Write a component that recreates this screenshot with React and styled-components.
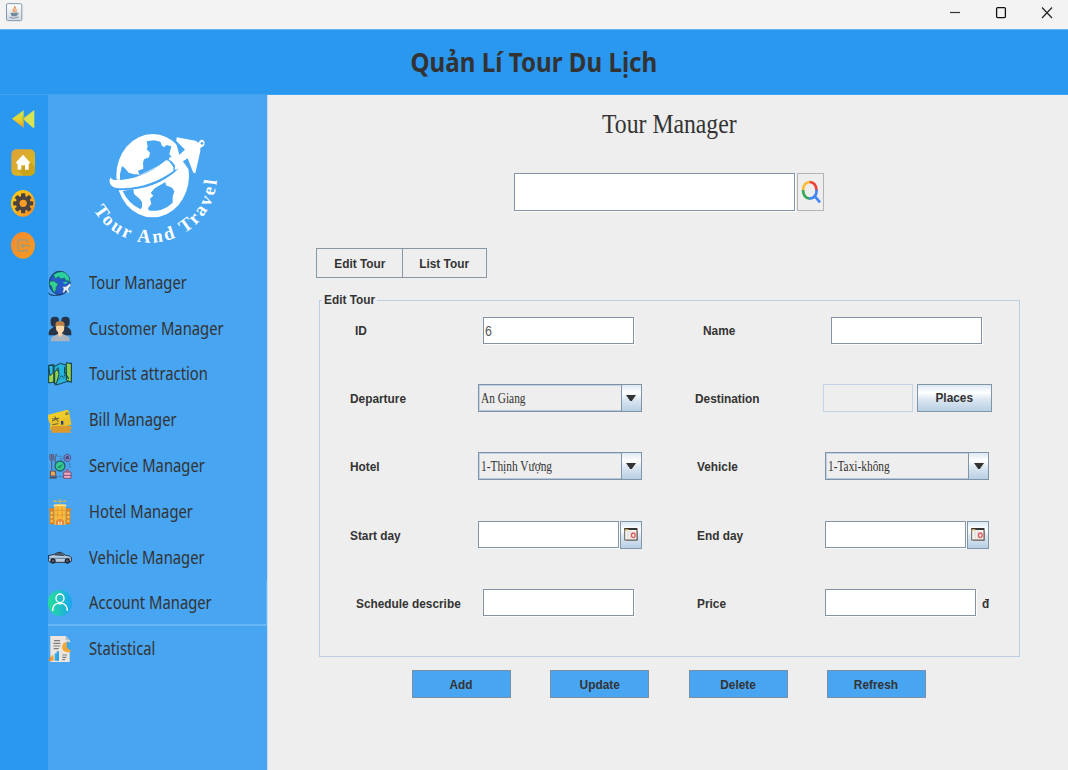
import React from "react";
import styled, { createGlobalStyle, css } from "styled-components";

const Global = createGlobalStyle`
  * { box-sizing: border-box; }
  body { margin: 0; background: #eee; color: #333; overflow: hidden; }
  button, input { font: inherit; color: inherit; padding: 0; margin: 0; border-radius: 0; outline: none; }
`;

const sans = `"Liberation Sans", Arial, sans-serif`;
const serif = `"Liberation Serif", "Times New Roman", serif`;
const tahoma = `"Noto Sans", Tahoma, sans-serif`;

const Window = styled.div`
  width: 1068px;
  height: 770px;
  display: flex;
  flex-direction: column;
  overflow: hidden;
  font: bold 13.4px/16px ${sans};
`;

const Narrow = styled.span`
  display: inline-block;
  white-space: nowrap;
  transform: scaleX(${(p) => p.$x || 0.885});
  transform-origin: ${(p) => (p.$left ? "left" : "center")} center;
`;

const TitleBar = styled.header`
  height: 29px;
  flex: none;
  display: flex;
  justify-content: space-between;
  background: #f3f3f3;
  padding: 3px 15px 0 6px;
`;

const WindowControls = styled.div`
  display: flex;
  gap: 34px;
  padding-top: 3px;
  svg { display: block; }
`;

const Banner = styled.div`
  height: 66px;
  flex: none;
  display: flex;
  justify-content: center;
  align-items: center;
  background: #2b98ef;
  border-top: 1px solid #63b3f3;
  border-bottom: 1px solid #3fa2f1;
  font: bold 26.2px/32px ${tahoma};
  padding-bottom: 1px;
`;

const Body = styled.div`
  flex: 1;
  display: flex;
  min-height: 0;
`;

const Rail = styled.nav`
  width: 48px;
  flex: none;
  background: #2b98ef;
  display: flex;
  flex-direction: column;
  padding: 14px 0 0 11px;
  svg { display: block; }
`;

const RailButton = styled.div`
  height: 27px;
  margin-bottom: ${(p) => p.$gap || 13}px;
`;

const Sidebar = styled.aside`
  width: 220px;
  flex: none;
  background: #48a5f2;
  border-right: 1px solid #c4def4;
`;

const LogoBox = styled.div`
  padding: 25px 0 0 32px;
  height: 165px;
  svg { display: block; }
`;

const MenuItem = styled.div`
  height: 45.8px;
  display: flex;
  align-items: center;
  gap: 17.4px;
  font: 18.4px/24px ${tahoma};
  svg { flex: none; display: block; }
  span { padding-bottom: 2px; }
  ${(p) =>
    p.$active &&
    css`
      padding-top: 2px;
      border-bottom: 2px solid #69b6f5;
      border-right: 1px solid #69b6f5;
    `}
`;

const Main = styled.main`
  flex: 1;
  display: flex;
  flex-direction: column;
  min-width: 0;
`;

const PageTitle = styled.h1`
  margin: 13px 0 0;
  height: 32px;
  text-align: center;
  font: 27.6px/32px ${serif};
  padding-left: 2px;
`;

const SearchRow = styled.div`
  display: flex;
  gap: 2px;
  margin: 33px 0 0 246px;
`;

const TextField = styled.input`
  width: ${(p) => p.$w || 151}px;
  height: ${(p) => p.$h || 27}px;
  border: 1px solid #8494a4;
  background: #fff;
  box-shadow: 1px 1px 0 #fcfcfc;
  font: 14px/20px ${sans};
  color: #555;
  padding-left: 2px;
  ${(p) =>
    p.$disabled &&
    css`
      background: #eee;
      border-color: #c3d5e6;
      box-shadow: none;
    `}
`;

const ValueField = styled.div`
  width: 151px;
  height: 27px;
  border: 1px solid #8494a4;
  background: #fff;
  box-shadow: 1px 1px 0 #fcfcfc;
  padding: 4px 0 0 1px;
  font: 14px/18px ${sans};
  color: #555;
`;

const SearchButton = styled.button`
  width: 27px;
  height: 38px;
  border: 1px solid #b3b3b3;
  background: #eee;
  display: flex;
  align-items: center;
  justify-content: center;
`;

const Tabs = styled.div`
  display: flex;
  margin: 37px 0 0 48px;
`;

const Tab = styled.button`
  width: ${(p) => p.$w}px;
  height: 30px;
  border: 1px solid #8797a6;
  background: #eee;
  padding-top: 2px;
  & + & { margin-left: -1px; }
`;

const Panel = styled.fieldset`
  width: 701px;
  height: 365px;
  margin: 14px 0 0 51px;
  border: 1px solid #bdd0e3;
  padding: 8px 0 0;
  min-width: 0;
  legend {
    padding: 0 0 0 2px;
    width: 55px;
    margin-left: 2px;
    height: 16px;
  }
`;

const FormRow = styled.div`
  display: flex;
  height: 68.2px;
`;

const Field = styled.div`
  width: 348px;
  flex: none;
  height: 28px;
  display: flex;
  align-items: center;
`;

const Label = styled.label`
  padding-left: ${(p) => p.$inset}px;
  width: ${(p) => p.$w}px;
  flex: none;
  white-space: nowrap;
  padding-top: 2px;
`;

const Group = styled.div`
  display: flex;
  gap: ${(p) => p.$gap || 1}px;
`;

const Combo = styled.div`
  width: 164px;
  height: 28px;
  border: 1px solid #7f92a6;
  box-shadow: inset 1px 1px 0 #c0d3e6, inset 0 -1px 0 #b3c6d9;
  display: flex;
  justify-content: space-between;
  font: 14.4px/26px ${serif};
  padding-left: 2px;
`;

const steel = css`
  border: 1px solid #8195a9;
  background: linear-gradient(#dde8f3 0%, #fff 30%, #dce7f1 55%, #b8cfe5 100%);
`;

const Arrow = styled.div`
  ${steel}
  border-width: 0 0 0 1px;
  width: 20px;
  display: flex;
  align-items: center;
  justify-content: center;
`;

const SteelButton = styled.button`
  ${steel}
  width: ${(p) => p.$w}px;
  height: 28px;
  display: flex;
  align-items: center;
  justify-content: center;
`;

const Currency = styled.span`
  width: 7px;
  overflow: hidden;
  padding-top: 7px;
  margin-left: 5px;
`;

const Actions = styled.div`
  display: flex;
  gap: 39.3px;
  margin: 13px 0 0 144px;
`;

const Action = styled.button`
  width: 99px;
  height: 28px;
  background: #48a5f2;
  border: 1px solid #7b8fa3;
  padding-top: 1px;
`;

const Icon = ({ w = 24, h = 26, box = "0 0 72 78", children }) => (
  <svg width={w} height={h} viewBox={box} preserveAspectRatio="none">{children}</svg>
);

const Logo = () => (
  <svg width="160" height="140" viewBox="0 0 480 420">
    <defs><path id="arc" d="M40 270 A200 203 0 0 0 411 160" /></defs>
    <ellipse cx="218" cy="167" rx="109" ry="125" fill="#fff" />
    <g fill="#48a5f2">
      <path d="M200 64 L222 61 241 65 246 77 252 82 260 75 274 79 268 103 276 112 255 128 178 165 174 152 190 146 189 128 192 118 207 112 210 98 200 88 203 80Z" />
      <path d="M120 162 L126 138 134 144 146 158 162 163 174 163 180 172 120 182Z" />
      <path d="M128 213 L160 207 162 222 180 238 186 247 186 262 182 268 Q144 250 128 213Z" />
      <path d="M224 205 L256 186 258 196 276 203 283 214 278 230 278 248 262 261 244 269 Q220 275 206 271 L204 264 214 252 210 236 220 227 212 219Z" />
      <path d="M84 168 C110 194 180 175 270 116 L294 148 C250 190 186 216 96 210Z" />
      <path d="M282 46 L300 112 330 154 334 110 304 64Z" />
    </g>
    <path d="M92 171 C84 184 91 200 106 203 C168 212 238 184 280 153 L280 140 266 122 258 121 C205 165 150 182 106 180 Q92 179 92 171Z" fill="#fff" />
    <path d="M290 52 L346 62 357 68 Q358 58 368 59 Q378 66 371 78 L361 84 361 94 346 160 340 158 323 115 299 130 290 150 284 148 286 132 266 118 270 111 287 114 315 89 289 63Z" fill="#fff" />
    <circle cx="366" cy="70" r="4" fill="#48a5f2" />
    <text fill="#fff" fontFamily="Liberation Serif, serif" fontWeight="bold" fontSize="56" textLength="506" lengthAdjust="spacing">
      <textPath href="#arc" textLength="506" lengthAdjust="spacing">Tour And Travel</textPath>
    </text>
  </svg>
);

const JavaIcon = () => (
  <Icon w={17} h={19} box="0 0 51 57">
    <defs><linearGradient id="jv" x2="0" y2="1"><stop stopColor="#fff" /><stop offset="1" stopColor="#d2d8de" /></linearGradient></defs>
    <rect x="1.5" y="2" width="46" height="51" rx="4" fill="url(#jv)" stroke="#8397aa" strokeWidth="3" />
    <path d="M24 27 Q16 21 24 16 Q28 13 25 9 Q33 15 26 20 Q23 23 27 28 M31 28 Q27 24 32 19" fill="none" stroke="#e98845" strokeWidth="3" />
    <path d="M13 29 H34 L32 40 H17Z" fill="#71889d" />
    <path d="M33 30 Q41 30 33 37" fill="none" stroke="#71889d" strokeWidth="3" />
    <path d="M10 43 Q24 49 38 42" fill="none" stroke="#8298aa" strokeWidth="3" />
  </Icon>
);

const RewindIcon = () => (
  <Icon w={24} h={20} box="0 0 72 60">
    <defs>
      <linearGradient id="rw1" x1="1" y2="1"><stop stopColor="#bfe65a" /><stop offset=".5" stopColor="#e8d32e" /><stop offset="1" stopColor="#ef9d25" /></linearGradient>
      <linearGradient id="rw2" x2="1" y2="1"><stop stopColor="#f1b45c" /><stop offset=".5" stopColor="#d5e555" /><stop offset="1" stopColor="#e3e34a" /></linearGradient>
    </defs>
    <path d="M3 29 L38 4 V56Z" fill="url(#rw1)" />
    <path d="M35 29 L70 3 V56 H66Z" fill="url(#rw2)" />
    <path d="M38 20 Q33 29 38 38" fill="none" stroke="#7fba59" strokeWidth="3" />
  </Icon>
);

const HomeIcon = () => (
  <Icon w={24} h={27} box="0 0 72 81">
    <defs><linearGradient id="hm" x2="1" y2="1"><stop stopColor="#dd9f3c" /><stop offset="1" stopColor="#d9bf18" /></linearGradient></defs>
    <rect x="1" y="1" width="71" height="79" rx="15" fill="url(#hm)" />
    <path d="M20 62 L58 40 72 54 V65 Q71 80 56 80 H38Z" fill="#b98f14" opacity=".5" />
    <path d="M14 41 L36 17 58 41 53 45 V62 H42 V49 H31 V62 H20 V45Z" fill="#fff" />
  </Icon>
);

const GearIcon = () => (
  <Icon w={24} h={27} box="0 0 72 81">
    <defs><linearGradient id="gr" x1="0" x2="1" y2="1"><stop stopColor="#fbd014" /><stop offset=".5" stopColor="#fbb51c" /><stop offset="1" stopColor="#f98422" /></linearGradient></defs>
    <ellipse cx="36" cy="40" rx="36" ry="40" fill="url(#gr)" />
    <g fill="#4b4340">
      {[0, 45, 90, 135].map((a) => <rect key={a} x="30" y="10" width="13" height="60" rx="3" transform={`rotate(${a} 36.5 40)`} />)}
      <circle cx="36.5" cy="40" r="22" />
    </g>
    <circle cx="36.5" cy="40" r="11" fill="#fb9d24" />
  </Icon>
);

const ExitIcon = () => (
  <Icon w={24} h={27} box="0 0 72 81">
    <defs><linearGradient id="ex" x2="1" y2="1"><stop stopColor="#f58b32" /><stop offset="1" stopColor="#f59a1e" /></linearGradient></defs>
    <ellipse cx="36" cy="40" rx="36" ry="40" fill="url(#ex)" />
    <path d="M49 34 V24 H21 V56 H49 V50 M58 41 H32 M39 34 L31 41 39 48" fill="none" stroke="#a79a70" strokeWidth="4.6" />
  </Icon>
);

const GlobeIcon = () => (
  <Icon>
    <ellipse cx="35" cy="39" rx="31" ry="35" fill="#2459c9" stroke="#17345c" strokeWidth="3" />
    <path d="M16 14 Q35 0 52 8 Q68 20 66 38 L59 31 53 34 50 24 38 27 32 20 22 26Z" fill="#2ccfa0" stroke="#17614f" strokeWidth="2" />
    <path d="M5 34 L18 33 31 43 25 50 24 60 18 68 13 58 11 49 4 44Z" fill="#35cf92" stroke="#185f5a" strokeWidth="2" />
    <path d="M43 37 L59 35 53 43Z" fill="#2ccfa0" />
    <path d="M1 69 Q18 82 41 73 M4 73 Q22 80 33 79" stroke="#18345e" strokeWidth="3" fill="none" strokeDasharray="8 3" />
    <path d="M44 50 L54 50 65 41 69 45 61 56 64 69 59 68 54 59 48 68 44 67 47 57Z" fill="#ecf0f6" stroke="#667996" />
  </Icon>
);

const PeopleIcon = () => (
  <Icon>
    <g fill="#26344a">
      <rect x="8" y="2" width="25" height="30" rx="11" /><rect x="40" y="2" width="25" height="30" rx="11" />
      <path d="M2 58 Q1 40 10 38 L17 32 H57 L65 38 Q71 42 70 58Z" />
    </g>
    <path d="M9 76 Q8 62 19 60 L29 54 H45 L56 60 Q67 62 65 76Z" fill="#a9b4be" />
    <path d="M30 47 H43 V56 L36 64 30 56Z" fill="#f4d0a4" />
    <path d="M24 26 Q22 44 31 49 Q37 53 43 49 Q51 43 48 26Z" fill="#f9d8ac" />
    <path d="M23 32 Q19 15 36 16 Q53 15 49 32 L45 29 H28Z" fill="#bb8147" />
  </Icon>
);

const MapIcon = () => (
  <Icon>
    <g stroke="#143c48" strokeWidth="3">
      <path d="M2 13 L18 11 V63 L2 66Z" fill="#9bd551" />
      <path d="M18 17 L37 7 53 12 70 6 V62 L55 62 38 68 22 72 18 66Z" fill="#25b4dd" />
      <path d="M55 5 L70 8 V64 L55 57Z" fill="#8fce4b" />
      <path d="M2 13 L16 14 15 35 6 44Z" fill="#2bbbe4" />
      <path d="M20 34 L30 20 33 40 25 68 20 66Z" fill="#91d24c" />
    </g>
    <path d="M33 56 L41 43 47 52 52 35 M26 28 L34 30" stroke="#194352" strokeWidth="3" fill="none" strokeDasharray="5 3" />
    <path d="M50 17 V34 L62 54" stroke="#14494c" strokeWidth="4" fill="none" />
  </Icon>
);

const TicketIcon = () => (
  <Icon>
    <path d="M0 24 L60 8 65 22 68 40 70 53 6 69 7 51 1 39Z" fill="#e9c22a" />
    <path d="M13 57 H70 V67 L65 69 70 77 H9 L12 69 7 65Z" fill="#dc9a2e" />
    <path d="M0 24 L60 8 62 17 58 22 64 29 4 45Z" fill="#efcb2c" />
    <path d="M12 42 L34 33 M20 28 L31 45 M12 36 L29 34 M52 20 L59 16 M53 23 L62 20 M13 53 L31 50" stroke="#625d3a" strokeWidth="3" fill="none" />
    <rect x="39" y="42" width="7" height="11" fill="#263c84" />
  </Icon>
);

const ServiceIcon = () => (
  <Icon>
    <path d="M6 3 V19 Q12 25 16 18 V3 M11 3 V50 M26 3 Q18 15 22 27 L25 31 V51" fill="none" stroke="#596186" strokeWidth="4" />
    <path d="M36 17 H47 M29 10 H41 M25 71 H46 M65 31 V47" stroke="#47678e" strokeWidth="3" strokeDasharray="5 3" />
    <path d="M48 9 L57 3 67 8 68 19 60 27 49 22Z" fill="#7c83cc" stroke="#4c5a8e" strokeWidth="3" /><circle cx="58" cy="14" r="5" fill="#344b79" />
    <circle cx="36" cy="39" r="15" fill="#34c991" stroke="#275e72" strokeWidth="4" />
    <path d="M27 42 L46 32 36 46Z" fill="#24866d" />
    <path d="M7 54 H22 L24 69 H7Z" fill="#efa74d" stroke="#4d4c68" strokeWidth="3" />
    <path d="M4 74 H26" stroke="#4d4c68" strokeWidth="5" />
    <path d="M47 57 H69 V76 H47Z" fill="#f5a9c2" stroke="#775276" strokeWidth="3" />
    <path d="M51 58 Q58 35 65 58Z" fill="#a46485" /><path d="M47 67 H69" stroke="#775276" strokeWidth="3" />
  </Icon>
);

const HotelIcon = () => (
  <Icon>
    <path d="M15 7 H57 M36 0 V15 M23 4 V11 M49 4 V11" stroke="#f2bd38" strokeWidth="3" strokeDasharray="5 3" />
    <path d="M3 28 H19 V76 H5 V34 H3Z M53 28 H69 V34 H67 V76 H53Z" fill="#d98427" />
    <path d="M19 19 Q36 12 53 19 V77 H19Z" fill="#f8bd3d" />
    <path d="M17 19 H55" stroke="#ffe48b" strokeWidth="5" />
    <path d="M29 22 V58 M42 22 V58 M20 34 H52 M20 48 H52" stroke="#e9982f" strokeWidth="3" />
    <path d="M11 38 V70 M61 38 V70" stroke="#ffc85b" strokeWidth="6" strokeDasharray="8 4" />
    <path d="M24 78 V65 Q36 53 48 65 V78Z" fill="#e7893c" /><path d="M30 78 V68 H42 V78Z" fill="#ffe0a3" /><path d="M36 66 V78" stroke="#ed7438" strokeWidth="3" />
  </Icon>
);

const CarIcon = () => (
  <Icon>
    <path d="M1 32 L19 28 Q29 20 40 22 L53 31 Q70 32 71 39 L70 49 60 52 H8 L1 48Z" fill="#b9cce0" stroke="#29374a" strokeWidth="3" />
    <path d="M20 30 L29 24 38 24 49 32Z" fill="#496074" stroke="#29374a" strokeWidth="2" />
    <path d="M4 40 H69" stroke="#657d96" strokeWidth="3" />
    <g fill="#555b68" stroke="#1c2836" strokeWidth="4"><circle cx="15" cy="48" r="6" /><circle cx="58" cy="48" r="6" /></g>
    <path d="M1 31 V42" stroke="#0d4171" strokeWidth="5" />
  </Icon>
);

const AccountIcon = () => (
  <Icon>
    <defs><linearGradient id="ac" x2="1"><stop stopColor="#25e094" /><stop offset="1" stopColor="#1ba4f3" /></linearGradient></defs>
    <ellipse cx="36" cy="39" rx="36" ry="39" fill="url(#ac)" />
    <ellipse cx="36" cy="25" rx="12" ry="13" fill="none" stroke="#fff" strokeWidth="4" />
    <path d="M14 63 Q14 41 31 40 Q36 44 41 40 Q57 41 58 63" fill="none" stroke="#fff" strokeWidth="4" />
  </Icon>
);

const ReportIcon = () => (
  <Icon>
    <path d="M7 0 H53 L65 13 V78 H7Z" fill="#eee6de" />
    <path d="M53 0 V13 H65Z" fill="#b8bdbe" />
    <path d="M18 14 H36 M16 22 H37 M16 30 H37 M17 38 H32 M43 57 H57 M43 64 H55 M43 71 H51" stroke="#777e82" strokeWidth="3.5" />
    <path d="M57 18 V31 L70 44 Q64 52 56 48 L48 46 Q39 38 44 25 Q49 18 57 18Z" fill="#f5a637" />
    <path d="M57 16 Q70 20 70 34 L67 44 56 33Z" fill="#35a8ee" />
    <path d="M1 74 L7 63 H15 V74Z" fill="#f28b31" /><path d="M10 58 H17 V74 H10Z" fill="#f5a637" /><path d="M20 52 H33 V74 H20Z" fill="#37a9ea" /><path d="M26 46 H33 V74 H26Z" fill="#2ba1e8" />
  </Icon>
);

const GoogleSearchIcon = () => (
  <Icon w={20} h={24} box="0 0 60 72">
    <g fill="none" strokeWidth="8">
      <path d="M6 31 Q7 7 27 6" stroke="#fbbc37" /><path d="M26 6 Q45 7 47 31" stroke="#ea4335" />
      <path d="M6 30 Q7 54 26 56" stroke="#34a853" /><path d="M25 56 Q47 55 47 29 M40 47 L57 67" stroke="#4285f4" />
    </g>
  </Icon>
);

const CalendarIcon = () => (
  <Icon w={14} h={13} box="0 0 42 39">
    <rect x="2" y="3" width="37" height="33" fill="#f5f3f0" stroke="#68625f" strokeWidth="3" />
    <path d="M1 3 H40" stroke="#383634" strokeWidth="6" /><path d="M3 5 H13" stroke="#d0a24b" strokeWidth="4" />
    <path d="M12 9 V35 M20 9 V35" stroke="#ccc9c6" strokeWidth="2" />
    <ellipse cx="28" cy="22" rx="5.5" ry="7" fill="none" stroke="#e6575a" strokeWidth="4" />
    <path d="M40 8 V37 H6" fill="none" stroke="#77716d" strokeWidth="3" />
  </Icon>
);

const Select = ({ value }) => (
  <Combo>
    <Narrow $left $x={0.79}>{value}</Narrow>
    <Arrow><svg width="10" height="7" viewBox="0 0 10 7"><path d="M0 0H10L5.8 6H4.2Z" fill="#333" /></svg></Arrow>
  </Combo>
);

const DatePicker = () => (
  <Group>
    <TextField $w={141} $h={27} />
    <SteelButton $w={22}><CalendarIcon /></SteelButton>
  </Group>
);

const menu = [
  ["Tour Manager", GlobeIcon],
  ["Customer Manager", PeopleIcon],
  ["Tourist attraction", MapIcon],
  ["Bill Manager", TicketIcon],
  ["Service Manager", ServiceIcon],
  ["Hotel Manager", HotelIcon],
  ["Vehicle Manager", CarIcon],
  ["Account Manager", AccountIcon],
  ["Statistical", ReportIcon],
];

const rows = [
  [
    { label: "ID", inset: 35, w: 163, control: <ValueField><Narrow $left>6</Narrow></ValueField> },
    { label: "Name", inset: 35, w: 163, control: <TextField /> },
  ],
  [
    { label: "Departure", inset: 30, w: 157.6, control: <Select value="An Giang" /> },
    {
      label: "Destination", inset: 27, w: 155,
      control: (
        <Group $gap={4.5}>
          <TextField $disabled disabled $w={89.5} $h={28} />
          <SteelButton $w={75}><Narrow>Places</Narrow></SteelButton>
        </Group>
      ),
    },
  ],
  [
    { label: "Hotel", inset: 30, w: 157.6, control: <Select value="1-Thịnh Vượng" /> },
    { label: "Vehicle", inset: 29, w: 157, control: <Select value="1-Taxi-không" /> },
  ],
  [
    { label: "Start day", inset: 30, w: 157.6, control: <DatePicker /> },
    { label: "End day", inset: 29, w: 157, control: <DatePicker /> },
  ],
  [
    { label: "Schedule describe", inset: 36, w: 163, control: <TextField /> },
    { label: "Price", inset: 29, w: 157, control: <Group><TextField /><Currency><Narrow $left>đ</Narrow></Currency></Group> },
  ],
];

export default function App() {
  return (
    <Window>
      <Global />
      <TitleBar>
        <JavaIcon />
        <WindowControls>
          <svg width="12" height="13" viewBox="0 0 12 13"><path d="M1 6.5H11" stroke="#333" strokeWidth="1.2" /></svg>
          <svg width="12" height="13" viewBox="0 0 12 13"><rect x="1.6" y="1.6" width="8.8" height="10" rx="1" fill="none" stroke="#111" strokeWidth="1.3" /></svg>
          <svg width="12" height="13" viewBox="0 0 12 13"><path d="M1 1.5L11 12M11 1.5L1 12" stroke="#222" strokeWidth="1.2" /></svg>
        </WindowControls>
      </TitleBar>
      <Banner><Narrow $x={0.922}>Quản Lí Tour Du Lịch</Narrow></Banner>
      <Body>
        <Rail>
          <RailButton><RewindIcon /></RailButton>
          <RailButton $gap={14}><HomeIcon /></RailButton>
          <RailButton $gap={15}><GearIcon /></RailButton>
          <RailButton><ExitIcon /></RailButton>
        </Rail>
        <Sidebar>
          <LogoBox><Logo /></LogoBox>
          {menu.map(([name, Glyph]) => (
            <MenuItem key={name} $active={name === "Account Manager"}>
              <Glyph />
              <Narrow $left $x={0.804}>{name}</Narrow>
            </MenuItem>
          ))}
        </Sidebar>
        <Main>
          <PageTitle><Narrow $x={0.859}>Tour Manager</Narrow></PageTitle>
          <SearchRow>
            <TextField $w={281} $h={38} />
            <SearchButton><GoogleSearchIcon /></SearchButton>
          </SearchRow>
          <Tabs>
            <Tab $w={87}><Narrow>Edit Tour</Narrow></Tab>
            <Tab $w={85}><Narrow>List Tour</Narrow></Tab>
          </Tabs>
          <Panel>
            <legend><Narrow $left>Edit Tour</Narrow></legend>
            {rows.map((fields, i) => (
              <FormRow key={i}>
                {fields.map((f) => (
                  <Field key={f.label}>
                    <Label $inset={f.inset} $w={f.w}><Narrow $left>{f.label}</Narrow></Label>
                    {f.control}
                  </Field>
                ))}
              </FormRow>
            ))}
          </Panel>
          <Actions>
            {["Add", "Update", "Delete", "Refresh"].map((a) => (
              <Action key={a}><Narrow>{a}</Narrow></Action>
            ))}
          </Actions>
        </Main>
      </Body>
    </Window>
  );
}
